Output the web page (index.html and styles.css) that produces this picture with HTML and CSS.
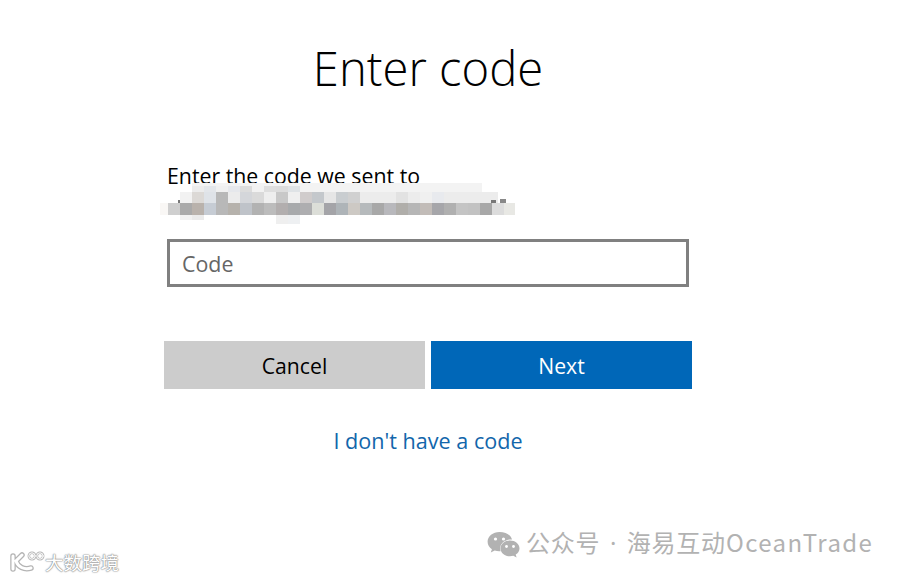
FILE: index.html
```html
<!DOCTYPE html>
<html lang="en">
<head>
<meta charset="utf-8">
<title>Enter code</title>
<link rel="stylesheet" href="styles.css">
</head>
<body>
<main class="dialog">
  <h1 class="title">Enter code</h1>
  <div class="prompt">
    <p class="prompt-text">Enter the code we sent to</p>
    <svg class="mosaic" width="356" height="42" viewBox="0 0 356 42" aria-hidden="true">
      <g>
        <rect x="32" y="0" width="290" height="9" fill="#f3f3f3"/>
        <rect x="28" y="9" width="310" height="11" fill="#ececec"/>
      </g>
      <g>
        <rect x="18" y="17" width="4" height="3" fill="#777"/><rect x="24" y="17" width="4" height="3" fill="#888"/><rect x="331" y="17" width="5" height="3" fill="#777"/><rect x="340" y="16" width="6" height="4" fill="#888"/>
        <rect x="32" y="3" width="12" height="9" fill="#ececec"/><rect x="44" y="3" width="12" height="9" fill="#e3e6ea"/><rect x="56" y="3" width="12" height="9" fill="#f0f0f0"/><rect x="68" y="3" width="12" height="9" fill="#e6e8ec"/><rect x="80" y="3" width="12" height="9" fill="#dcdcdc"/><rect x="92" y="3" width="12" height="9" fill="#f2f2f2"/><rect x="104" y="3" width="12" height="9" fill="#dedede"/><rect x="116" y="3" width="12" height="9" fill="#dcdcdc"/><rect x="128" y="3" width="12" height="9" fill="#dfe3e6"/>
        <rect x="20" y="9" width="12" height="11" fill="#f2f2f2"/><rect x="32" y="9" width="12" height="11" fill="#dcd9d6"/><rect x="44" y="9" width="12" height="11" fill="#dfe3e8"/><rect x="56" y="9" width="12" height="11" fill="#b8b8b8"/><rect x="68" y="9" width="12" height="11" fill="#ececec"/><rect x="80" y="9" width="12" height="11" fill="#d4d6da"/><rect x="92" y="9" width="12" height="11" fill="#dadada"/><rect x="104" y="9" width="12" height="11" fill="#eeeeee"/><rect x="116" y="9" width="12" height="11" fill="#c8c8c8"/><rect x="128" y="9" width="12" height="11" fill="#efefef"/><rect x="140" y="9" width="12" height="11" fill="#d0cccc"/><rect x="152" y="9" width="12" height="11" fill="#c4c8cc"/><rect x="164" y="9" width="12" height="11" fill="#e6e6e6"/><rect x="176" y="9" width="12" height="11" fill="#c9cdd0"/><rect x="188" y="9" width="12" height="11" fill="#d0d0d0"/><rect x="236" y="9" width="12" height="11" fill="#e2e2e2"/><rect x="260" y="9" width="12" height="11" fill="#f0f0f0"/><rect x="272" y="9" width="12" height="11" fill="#e8eaee"/>
        <rect x="0" y="20" width="8" height="12" fill="#f9f7f5"/><rect x="8" y="20" width="12" height="12" fill="#cfcfcf"/><rect x="20" y="20" width="12" height="12" fill="#aaaaaa"/><rect x="32" y="20" width="12" height="12" fill="#b9b2ac"/><rect x="44" y="20" width="12" height="12" fill="#c6ccd4"/><rect x="56" y="20" width="12" height="12" fill="#b8b8b8"/><rect x="68" y="20" width="12" height="12" fill="#b6b2ac"/><rect x="80" y="20" width="12" height="12" fill="#bfc3c9"/><rect x="92" y="20" width="12" height="12" fill="#b2b2b2"/><rect x="104" y="20" width="12" height="12" fill="#bcbcbc"/><rect x="116" y="20" width="12" height="12" fill="#b2aeae"/><rect x="128" y="20" width="12" height="12" fill="#a8aaac"/><rect x="140" y="20" width="12" height="12" fill="#aeaeb0"/><rect x="152" y="20" width="12" height="12" fill="#dcded8"/><rect x="164" y="20" width="12" height="12" fill="#a4a4a8"/><rect x="176" y="20" width="12" height="12" fill="#aeb4b8"/><rect x="188" y="20" width="12" height="12" fill="#cdc9c4"/><rect x="200" y="20" width="12" height="12" fill="#b6babc"/><rect x="212" y="20" width="12" height="12" fill="#a8a8a8"/><rect x="224" y="20" width="12" height="12" fill="#b8b8bc"/><rect x="236" y="20" width="12" height="12" fill="#b0aeaa"/><rect x="248" y="20" width="12" height="12" fill="#b6b6b6"/><rect x="260" y="20" width="12" height="12" fill="#c2bcb8"/><rect x="272" y="20" width="12" height="12" fill="#a6a6aa"/><rect x="284" y="20" width="12" height="12" fill="#b0b0b0"/><rect x="296" y="20" width="12" height="12" fill="#c4c4c4"/><rect x="308" y="20" width="12" height="12" fill="#c2c2c2"/><rect x="320" y="20" width="12" height="12" fill="#a8a8a8"/><rect x="332" y="20" width="12" height="12" fill="#dcdcdc"/><rect x="344" y="20" width="11" height="12" fill="#e8e8e4"/>
        <rect x="20" y="32" width="12" height="5" fill="#f2f2f2"/><rect x="32" y="32" width="12" height="5" fill="#ebebeb"/><rect x="116" y="32" width="12" height="9" fill="#efefef"/><rect x="128" y="32" width="12" height="9" fill="#eef0f2"/>
      </g>
    </svg>
  </div>
  <div class="field"><span class="placeholder">Code</span></div>
  <div class="actions">
    <button class="btn btn-cancel" type="button">Cancel</button>
    <button class="btn btn-next" type="button">Next</button>
  </div>
  <a class="link" href="#">I don't have a code</a>
</main>
<div class="mark-wechat">
  <svg class="wechat-icon" width="33" height="28" viewBox="0 0 33 28" aria-hidden="true">
    <path d="M12.5 1C5.9 1 .6 5.3.6 10.7c0 3 1.700 5.700 4.300 7.500L3.800 21.600l3.900-2c1.400.4 2.900.7 4.500.7.5 0 1 0 1.400-.1-.3-.9-.4-1.800-.4-2.700 0-5 4.800-9 10.700-9 .4 0 .8 0 1.100.1C24 3.900 18.800 1 12.500 1z" fill="#b2b2b2"/>
    <path d="M32.500 17.400c0-4.400-4.300-7.900-9.500-7.900s-9.500 3.500-9.500 7.900 4.300 7.900 9.500 7.900c1.200 0 2.300-.2 3.300-.5l3.300 1.800-.9-3c2.300-1.500 3.800-3.700 3.800-6.200z" fill="#b2b2b2"/>
    <circle cx="8.500" cy="8" r="1.600" fill="#fff"/><circle cx="16.500" cy="8" r="1.600" fill="#fff"/>
    <circle cx="19.500" cy="15.500" r="1.400" fill="#fff"/><circle cx="26.500" cy="15.500" r="1.400" fill="#fff"/>
  </svg>
  <span class="wechat-text">公众号<span class="wechat-sep"> · </span>海易互动<span class="wechat-latin">OceanTrade</span></span>
</div>
<div class="mark-brand">
  <svg class="brand-logo" width="42" height="24" viewBox="0 0 42 24" aria-hidden="true">
    <g fill="none" stroke-linecap="round">
      <path d="M7 6v13M16 5 10 11c2 6 8 9 15 7" stroke-width="5.500" stroke="#b4b4b4"/>
      <circle cx="26" cy="6" r="3.200" stroke="#b4b4b4" stroke-width="2.500"/>
      <circle cx="34" cy="6" r="3.200" stroke="#b4b4b4" stroke-width="2.500"/>
      <path d="M7 6v13M16 5 10 11c2 6 8 9 15 7" stroke-width="3" stroke="#fff"/>
      <circle cx="26" cy="6" r="3.200" stroke="#fff"/>
      <circle cx="34" cy="6" r="3.200" stroke="#fff"/>
    </g>
  </svg>
  <span class="brand-text">大数跨境</span>
</div>
</body>
</html>
```
FILE: styles.css
```css
* { box-sizing: border-box; }
html, body { margin: 0; padding: 0; background: #fff; }
body {
  position: relative;
  width: 900px;
  height: 579px;
  overflow: hidden;
  font-family: "Open Sans", "Noto Sans", sans-serif;
}
.dialog {
  width: 528px;
  margin-left: 164px;
  display: flex;
  flex-direction: column;
}
.title {
  margin: 36px 0 0;
  height: 65px;
  font-size: 47.200px;
  line-height: 65px;
  font-weight: 300;
  text-align: center;
  color: #000;
}
.prompt {
  position: relative;
  margin: 60px 0 0 3px;
  height: 78px;
}
.prompt-text {
  margin: 0;
  font-size: 21.300px;
  line-height: 30px;
  color: #000;
}
.mosaic {
  position: absolute;
  left: -7px;
  top: 22px;
}
.field {
  margin-left: 3px;
  width: 522px;
  height: 48px;
  border: 3px solid #808080;
  padding: 1px 0 0 12px;
  display: flex;
  align-items: center;
}
.placeholder {
  font-size: 21.400px;
  color: #666;
}
.actions {
  margin-top: 54px;
  display: flex;
  gap: 6px;
}
.btn {
  flex: 1;
  height: 48px;
  border: 0;
  padding: 0;
  font-family: inherit;
  font-size: 21.200px;
}
.btn-cancel { background: #ccc; color: #000; }
.btn-next { background: #0067b8; color: #fff; }
.link {
  margin-top: 37px;
  align-self: center;
  font-size: 21.600px;
  line-height: 30px;
  color: #1266ab;
  text-decoration: none;
}
.mark-wechat {
  position: absolute;
  left: 487px;
  top: 526px;
  display: flex;
  align-items: center;
  gap: 6px;
  color: #b2b2b2;
}
.wechat-icon { margin-top: 4px; }
.wechat-text {
  font-family: "Noto Sans CJK SC", "Noto Sans", sans-serif;
  font-size: 24px;
  line-height: 32px;
  letter-spacing: 0.800px;
  white-space: nowrap;
}
.wechat-sep {
  padding: 0 2.500px;
  font-family: "Noto Sans", sans-serif;
}
.wechat-latin { letter-spacing: 1.400px; }
.mark-brand {
  position: absolute;
  left: 6px;
  top: 549px;
  display: flex;
  align-items: center;
}
.brand-text {
  margin-left: -3px;
  font-family: "Noto Sans CJK SC", sans-serif;
  font-size: 18.500px;
  line-height: 26px;
  color: #fff;
  text-shadow: 0 0 2px #8c8c8c, 0 0 1px #8c8c8c, 0 0 1px #8c8c8c;
  white-space: nowrap;
}
```
